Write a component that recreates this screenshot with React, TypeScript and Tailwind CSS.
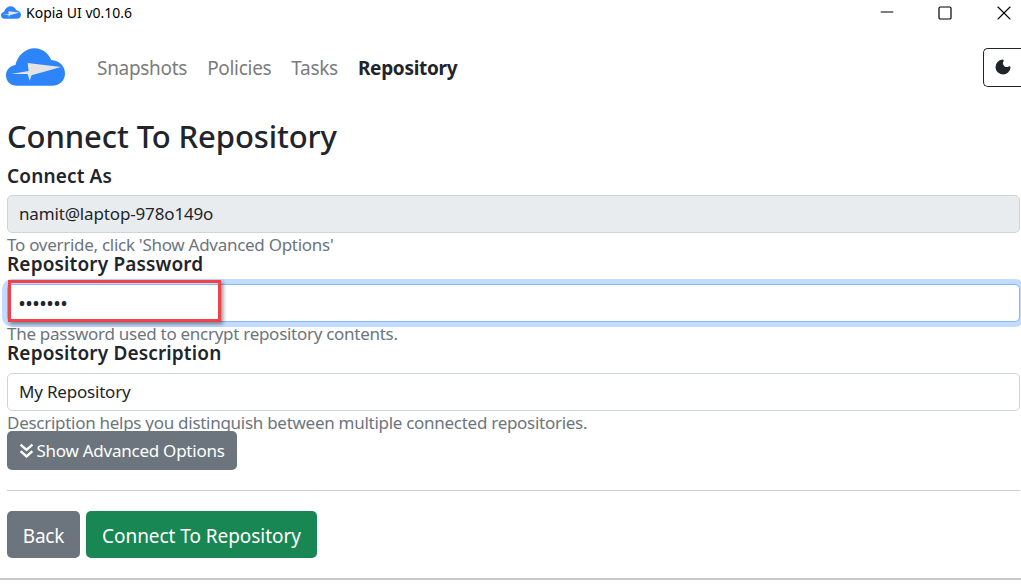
import { Minus, Moon, Square, X } from "lucide-react";

const font = { fontFamily: '"Noto Sans", sans-serif' };

function CloudLogo({ className }: { className?: string }) {
  return (
    <svg viewBox="0 0 60 38" className={className}>
      <path
        d="M10 38C4 38 0 33 0 27.500C0 22 4 18 9.500 17C12 7 20 0 29 0C37 0 43 5 46 12C54 12.500 60 18 60 25.500C60 33 54 38 47 38Z"
        fill="#2d84fb"
      />
      <path d="M5 26L23 23L22 15L56 19L26 27.500L24 33L22 26Z" fill="#e4e4e4" />
    </svg>
  );
}

function Help({ children }: { children: string }) {
  return <div className="h-[19px] text-[17px] leading-[19px] tracking-[-0.28px] whitespace-nowrap text-[#6c757d]">{children}</div>;
}

function Label({ children }: { children: string }) {
  return <div className="h-[20px] text-[19px] leading-[20px] font-semibold tracking-[0.15px] text-[#212529]">{children}</div>;
}

export default function App() {
  return (
    <div className="h-[587px] w-[1021px] overflow-hidden bg-white text-[#212529]" style={font}>
      <div className="flex h-[27px] items-center justify-between pb-[2px]">
        <div className="flex items-center gap-[5px] pl-[1px]">
          <CloudLogo className="h-[13px] w-[20px]" />
          <span className="text-[14px] text-black">Kopia UI v0.10.6</span>
        </div>
        <div className="flex items-center">
          <Minus className="mr-[40px] -mt-[2px] h-[20px] w-[20px] text-black" strokeWidth={1.4} />
          <Square className="mr-[39px] h-[16px] w-[16px] text-black" strokeWidth={1.8} />
          <X className="mr-[5px] h-[24px] w-[24px] text-black" strokeWidth={1.1} />
        </div>
      </div>

      <div className="flex h-[81px] items-center justify-between pb-[1px] pl-[6px]">
        <div className="flex items-center">
          <CloudLogo className="h-[38px] w-[59px]" />
          <nav className="mt-[2px] ml-[32px] flex gap-[20px] text-[19px] tracking-[-0.3px] text-[#7c7c7c]">
            <span>Snapshots</span>
            <span>Policies</span>
            <span>Tasks</span>
            <span className="font-bold text-[#212529]">Repository</span>
          </nav>
        </div>
        <div className="flex h-[39px] w-[38px] items-center justify-center rounded-l-[5px] border border-r-0 border-[#212529]">
          <Moon className="h-[18px] w-[18px] fill-[#212529] text-[#212529]" />
        </div>
      </div>

      <div className="px-[7px]">
        <h1 className="mt-[9px] h-[39px] text-[31px] leading-[39px] font-medium tracking-[-0.1px]">Connect To Repository</h1>
        <div className="mt-[10px]">
          <Label>Connect As</Label>
        </div>
        <div className="mt-[9px] flex h-[38px] w-[1013px] items-center rounded-[5px] border border-[#ced4da] bg-[#e9ecef] px-[11px] text-[17px] tracking-[-0.15px]">
          namit@laptop-978o149o
        </div>
        <div className="mt-[2px]">
          <Help>To override, click 'Show Advanced Options'</Help>
        </div>
        <Label>Repository Password</Label>

        <div className="relative mt-[10px] flex h-[38px] w-[1013px] items-center rounded-[5px] border border-[#86b7fe] bg-white px-[11px] shadow-[0_0_0_5px_#c2dbfe]">
          <span className="relative z-10 text-[16px] font-bold tracking-[1px]">•••••••</span>
          <div className="absolute top-[-5px] left-0 h-[42px] w-[213px] border-[3px] border-[#f0424a] shadow-[2px_2px_4px_rgba(0,0,0,0.45)]" />
        </div>

        <div className="mt-[2px]">
          <Help>The password used to encrypt repository contents.</Help>
        </div>
        <Label>Repository Description</Label>
        <div className="mt-[10px] flex h-[38px] w-[1013px] items-center rounded-[5px] border border-[#ced4da] bg-white px-[11px] text-[17px] tracking-[-0.2px]">
          My Repository
        </div>
        <div className="mt-[2px]">
          <Help>Description helps you distinguish between multiple connected repositories.</Help>
        </div>
        <button className="-mt-[1px] flex h-[39px] w-[230px] items-center justify-center gap-[2px] rounded-[5px] bg-[#6c757d] text-[17px] tracking-[-0.25px] text-white">
          <svg viewBox="0 0 14 14" className="h-[15px] w-[15px]" fill="none" stroke="currentColor" strokeWidth={2.2}>
            <path d="M1.500 1.500L7 6.500L12.500 1.500M1.500 7.500L7 12.500L12.500 7.500" />
          </svg>
          Show Advanced Options
        </button>
        <hr className="mt-[20px] w-[1013px] border-[#cfcfcf]" />
        <div className="mt-[20px] flex gap-[6px]">
          <button className="h-[47px] w-[73px] rounded-[5px] bg-[#6c757d] pt-[3px] text-[19px] tracking-[-0.2px] text-white">Back</button>
          <button className="h-[47px] w-[231px] rounded-[5px] bg-[#198754] pt-[3px] text-[19px] tracking-[-0.05px] text-white">Connect To Repository</button>
        </div>
      </div>
      <div className="mt-[20px] h-[2px] bg-[#c8c8c8]" />
    </div>
  );
}
